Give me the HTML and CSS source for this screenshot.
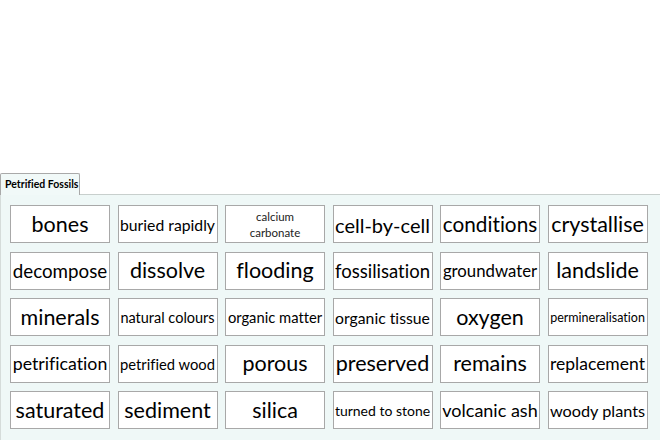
FILE: index.html
```html
<!DOCTYPE html>
<html>
<head>
<meta charset="utf-8">
<link rel="stylesheet" href="styles.css">
</head>
<body>
<div class="page">
  <div class="top"></div>
  <div class="tabbar">
    <div class="tab">Petrified Fossils</div>
    <div class="tabfill"></div>
  </div>
  <div class="panel">
    <div class="grid">
      <div class="card"><span class="word">bones</span></div>
      <div class="card"><span class="word">buried rapidly</span></div>
      <div class="card"><span class="word two">calcium<br>carbonate</span></div>
      <div class="card"><span class="word">cell-by-cell</span></div>
      <div class="card"><span class="word">conditions</span></div>
      <div class="card"><span class="word">crystallise</span></div>

      <div class="card"><span class="word">decompose</span></div>
      <div class="card"><span class="word">dissolve</span></div>
      <div class="card"><span class="word">flooding</span></div>
      <div class="card"><span class="word">fossilisation</span></div>
      <div class="card"><span class="word">groundwater</span></div>
      <div class="card"><span class="word">landslide</span></div>

      <div class="card"><span class="word">minerals</span></div>
      <div class="card"><span class="word">natural colours</span></div>
      <div class="card"><span class="word">organic matter</span></div>
      <div class="card"><span class="word">organic tissue</span></div>
      <div class="card"><span class="word">oxygen</span></div>
      <div class="card"><span class="word">permineralisation</span></div>

      <div class="card"><span class="word">petrification</span></div>
      <div class="card"><span class="word">petrified wood</span></div>
      <div class="card"><span class="word">porous</span></div>
      <div class="card"><span class="word">preserved</span></div>
      <div class="card"><span class="word">remains</span></div>
      <div class="card"><span class="word">replacement</span></div>

      <div class="card"><span class="word">saturated</span></div>
      <div class="card"><span class="word">sediment</span></div>
      <div class="card"><span class="word">silica</span></div>
      <div class="card"><span class="word">turned to stone</span></div>
      <div class="card"><span class="word">volcanic ash</span></div>
      <div class="card"><span class="word">woody plants</span></div>
    </div>
  </div>
</div>
<script src="fit.js"></script>
</body>
</html>
```

FILE: styles.css
```css
* { box-sizing: border-box; }
html, body { margin: 0; padding: 0; background: #ffffff; }
body {
  font-family: Lato, "Open Sans", sans-serif;
  font-variant-ligatures: none;
  color: #000;
}
.page {
  width: 660px;
  height: 440px;
  display: flex;
  flex-direction: column;
  overflow: hidden;
}
.top { height: 173px; flex: none; }
.tabbar {
  display: flex;
  height: 22px;
  flex: none;
}
.tab {
  width: 80px;
  border: 1px solid #a9a9a9;
  border-bottom: none;
  border-radius: 2px 2px 0 0;
  background: #f1f9f8;
  font-size: 10.5px;
  font-weight: 700;
  padding: 4px 0 0 4px;
  white-space: nowrap;
}
.tabfill {
  flex: 1;
  border-bottom: 1px solid #c8cfcd;
}
.panel {
  flex: 1;
  background: #eff8f7;
  border-left: 1px solid #d5dcda;
}
.grid {
  display: grid;
  grid-template-columns: repeat(6, 100px);
  grid-auto-rows: 38px;
  column-gap: 7.5px;
  row-gap: 8.5px;
  padding: 10px 0 0 9px;
}
.card {
  background: #ffffff;
  border: 1px solid #a8a8a8;
  display: flex;
  align-items: center;
  justify-content: center;
  overflow: hidden;
  padding-top: 1px;
}
.word {
  white-space: nowrap;
  font-size: 21px;
  line-height: 1.1;
  text-align: center;
}
.word.two {
  font-size: 11.5px;
  line-height: 16px;
  color: #222;
}
```

FILE: fit.js
```js
document.querySelectorAll('.word:not(.two)').forEach(function (el) {
  var size = 21.5;
  el.style.fontSize = size + 'px';
  while (el.offsetWidth > 95 && size > 6) {
    size -= 0.25;
    el.style.fontSize = size + 'px';
  }
});
```
